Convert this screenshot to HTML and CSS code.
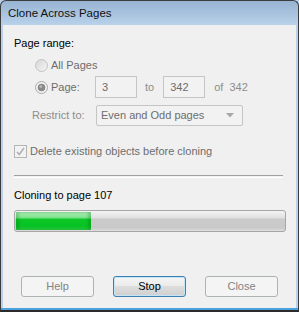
FILE: index.html
```html
<!DOCTYPE html>
<html lang="en">

<head>
    <meta charset="UTF-8">
    <title>Clone Across Pages</title>
    <link rel="stylesheet" href="styles.css">
</head>

<body>
    <div class="window">
        <div class="titlebar">Clone Across Pages</div>

        <div class="content">
            <div class="group-label">Page range:</div>

            <!-- Page range options -->
            <div class="range">
                <div class="radio-row">
                    <svg class="radio" width="13" height="13" viewBox="0 0 13 13">
                        <defs>
                            <linearGradient id="rg1" x1="0" y1="0" x2="1" y2="1">
                                <stop offset="0" stop-color="#d4d4d4" />
                                <stop offset="1" stop-color="#f7f7f7" />
                            </linearGradient>
                        </defs>
                        <circle cx="6.5" cy="6.5" r="6" fill="url(#rg1)" stroke="#c3c3c3" />
                    </svg>
                    <span class="opt">All Pages</span>
                </div>
                <div class="radio-row">
                    <svg class="radio" width="13" height="13" viewBox="0 0 13 13">
                        <circle cx="6.5" cy="6.5" r="6" fill="#f4f4f4" stroke="#a9a9a9" />
                        <circle cx="6.5" cy="6.5" r="3.5" fill="#8a8a8a" stroke="#7a7a7a" stroke-width="0.6" />
                        <circle cx="5.8" cy="5.6" r="1.4" fill="#b8b8b8" />
                    </svg>
                    <span class="opt page-label">Page:</span>
                    <span class="field">3</span>
                    <span class="muted to">to</span>
                    <span class="field">342</span>
                    <span class="muted of">of&nbsp; 342</span>
                </div>
                <div class="restrict-row">
                    <span class="muted restrict-label">Restrict to:</span>
                    <div class="select">
                        <span>Even and Odd pages</span>
                        <svg width="8" height="5" viewBox="0 0 8 5">
                            <path d="M0 0 L8 0 L4 4.5 Z" fill="#a8a8a8" />
                        </svg>
                    </div>
                </div>
            </div>

            <div class="check-row">
                <svg class="checkbox" width="13" height="13" viewBox="0 0 13 13">
                    <rect x="0.5" y="0.5" width="12" height="12" fill="#f3f3f3" stroke="#b5b5b5" />
                    <path d="M3 7 L5.2 9.5 L10 3" fill="none" stroke="#b0b0b0" stroke-width="1.6" />
                </svg>
                <span class="opt">Delete existing objects before cloning</span>
            </div>

            <div class="separator"></div>

            <div class="status">Cloning to page 107</div>

            <div class="progress">
                <div class="fill" style="width: 75px;"></div>
            </div>

            <div class="buttons">
                <div class="btn disabled">Help</div>
                <div class="btn default">Stop</div>
                <div class="btn disabled">Close</div>
            </div>
        </div>
    </div>
</body>

</html>
```

FILE: styles.css
```css
/* Dialog window */
body {
    margin: 0;
    font-family: 'Liberation Sans', Arial, sans-serif;
    font-size: 11px;
    color: #000;
    background-color: #b9d1ea;
}

.window {
    box-sizing: border-box;
    width: 299px;
    height: 312px;
    border: 1px solid #3c3c3c;
    border-radius: 6px 6px 0 0;
    background: linear-gradient(#97b4d2, #b9d1ea 24px, #b9d1ea);
    padding: 0 2px 2px 2px;
    display: flex;
    flex-direction: column;
    border-bottom: 2px solid #2b2b2b;
    box-shadow: inset 0 -2px 0 #4aa3df;
}

.titlebar {
    height: 24px;
    line-height: 24px;
    padding-left: 5px;
    font-size: 11.5px;
    color: #111;
}

.content {
    flex: 1;
    background-color: #f0f0f0;
    padding: 11px 10px 0 11px;
}

.group-label {
    line-height: 14px;
}

/* Page range */
.range {
    margin-top: 4px;
}

.radio-row {
    display: flex;
    align-items: center;
    height: 22px;
    padding-left: 21px;
}

.radio {
    margin-right: 3px;
}

.opt {
    color: #6d6d6d;
}

.muted {
    color: #8d8d8d;
}

.page-label {
    width: 44px;
}

.field {
    box-sizing: border-box;
    width: 42px;
    height: 22px;
    line-height: 20px;
    padding-left: 6px;
    border: 1px solid #c5c5c5;
    background-color: #f2f2f2;
    color: #6d6d6d;
}

.to {
    margin: 0 9px 0 8px;
}

.of {
    margin-left: 9px;
}

.restrict-row {
    display: flex;
    align-items: center;
    height: 22px;
    margin-top: 6px;
    padding-left: 18px;
}

.restrict-label {
    width: 64px;
}

.select {
    box-sizing: border-box;
    width: 147px;
    height: 21px;
    border: 1px solid #c5c5c5;
    border-radius: 2px;
    background-color: #f2f2f2;
    color: #6d6d6d;
    display: flex;
    align-items: center;
    justify-content: space-between;
    padding: 0 4px 0 4px;
}

.select svg {
    margin-right: 4px;
}

.check-row {
    display: flex;
    align-items: center;
    height: 14px;
    margin-top: 18px;
}

.checkbox {
    margin-right: 3px;
}

.separator {
    height: 1px;
    border-top: 1px solid #a0a0a0;
    border-bottom: 1px solid #ffffff;
    margin: 17px 1px 0 0;
    width: 269px;
}

.status {
    margin-top: 10px;
    line-height: 14px;
}

/* Progress bar */
.progress {
    box-sizing: border-box;
    margin-top: 8px;
    width: 272px;
    height: 22px;
    border: 1px solid #a6a6a6;
    border-radius: 3px;
    padding: 1px;
    background: linear-gradient(#f3f3f3, #e0e0e0 35%, #cbcbcb 40%, #c9c9c9 85%, #dedede);
}

.fill {
    height: 100%;
    border-radius: 1px;
    background: linear-gradient(#aef0b8, #80e38f 30%, #0bc626 42%, #06c223 80%, #2fd048);
    box-shadow: inset -3px 0 3px rgba(0, 90, 0, 0.25), inset 3px 0 3px rgba(0, 90, 0, 0.2);
}

/* Buttons */
.buttons {
    display: flex;
    justify-content: center;
    gap: 19px;
    margin-top: 44px;
    margin-left: -11px;
    margin-right: -10px;
}

.btn {
    box-sizing: border-box;
    width: 73px;
    height: 21px;
    line-height: 19px;
    text-align: center;
    border-radius: 3px;
}

.btn.disabled {
    border: 1px solid #adb2b5;
    background-color: #f4f4f4;
    color: #838383;
}

.btn.default {
    border: 1px solid #3c7fb1;
    background: linear-gradient(#f6f6f6, #ebebeb 45%, #dddddd 50%, #cfcfcf);
    box-shadow: inset 0 0 0 1px #c4e5f6;
    color: #000;
}
```
